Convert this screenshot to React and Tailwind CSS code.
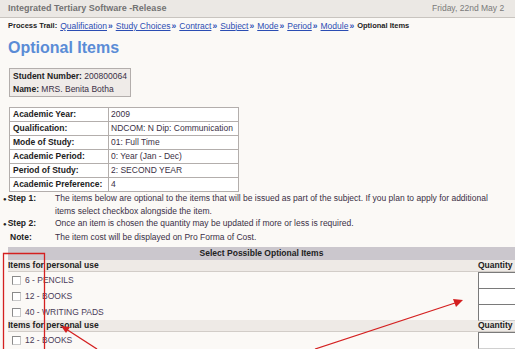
const trail = ["Qualification", "Study Choices", "Contract", "Subject", "Mode", "Period", "Module"];

const details = [
  ["Academic Year:", "2009"],
  ["Qualification:", "NDCOM: N Dip: Communication"],
  ["Mode of Study:", "01: Full Time"],
  ["Academic Period:", "0: Year (Jan - Dec)"],
  ["Period of Study:", "2: SECOND YEAR"],
  ["Academic Preference:", "4"],
];

const groups = [
  { title: "Items for personal use", items: ["6 - PENCILS", "12 - BOOKS", "40 - WRITING PADS"] },
  { title: "Items for personal use", items: ["12 - BOOKS"] },
];

const GroupHeader = ({ title }) => (
  <div className="flex h-[12px] items-center justify-between bg-[#eeeae6] border-b border-[#d2cdc8] text-[8.5px] font-bold text-[#222]">
    <span>{title}</span>
    <span className="w-[37px] shrink-0 whitespace-nowrap">Quantity</span>
  </div>
);

const ItemRow = ({ label }) => (
  <div className="flex h-[16px] items-center justify-between">
    <div className="flex items-center">
      <span className="ml-[4px] h-[9px] w-[9px] border border-[#8a8a8a] border-r-[#c8c8c8] border-b-[#c8c8c8] bg-white"></span>
      <span className="ml-[4px] text-[8.5px] text-[#4a3a58]">{label}</span>
    </div>
    <div className="w-[37px] shrink-0">
      <div className="h-[17px] w-[50px] border border-t-[#7a7a7a] border-l-[#7a7a7a] border-b-[#d0d0d0] border-r-[#d0d0d0] bg-white"></div>
    </div>
  </div>
);

const App = () => {
  return (
    <div className="relative h-[349px] w-[515px] overflow-hidden bg-[#fbf9f6] font-['Liberation_Sans',Arial,sans-serif] text-[#3a2f45]">
      <div className="flex h-[18px] items-center border-b border-[#c8c4bf] bg-[#ebe8e4]">
        <span className="pl-[8px] text-[9px] font-bold text-[#737373]">Integrated Tertiary Software -Release</span>
        <span className="ml-auto w-[83px] shrink-0 overflow-hidden whitespace-nowrap text-[8.5px] text-[#7a7a7a]">
          Friday, 22nd May 2
        </span>
      </div>

      <div className="mt-[2px] flex h-[12px] items-center whitespace-nowrap pl-[8px] text-[7.5px] font-bold text-[#222]">
        <span className="mr-[3px]">Process Trail:</span>
        {trail.map((t) => (
          <span key={t} className="flex items-center">
            <span className="text-[8.5px] font-normal text-[#2b4db3] underline">{t}</span>
            <span className="ml-[1px] mr-[3px] text-[8.5px] text-[#2b4db3]">»</span>
          </span>
        ))}
        <span>Optional Items</span>
      </div>

      <h1 className="mt-[5px] pl-[8px] text-[16px] font-bold leading-[22px] text-[#5a8cd6]">Optional Items</h1>

      <div className="ml-[9px] mt-[9px] w-[122px] border border-[#b3aeac] bg-[#efebe8] px-[3px] py-[1px] text-[8.5px] leading-[12.5px]">
        <div>
          <b className="text-[#222]">Student Number:</b> 200800064
        </div>
        <div>
          <b className="text-[#222]">Name:</b> MRS. Benita Botha
        </div>
      </div>

      <table className="ml-[9px] mt-[10px] w-[230px] border-collapse text-[8.5px]">
        <tbody>
          {details.map(([label, value]) => (
            <tr key={label} className="h-[14px]">
              <td className="w-[99px] border border-[#b3aeac] bg-white px-[3px] py-0 font-bold text-[#222]">{label}</td>
              <td className="border border-[#b3aeac] bg-white px-[2px] py-0">{value}</td>
            </tr>
          ))}
        </tbody>
      </table>

      <div className="pl-[3px] text-[8.5px] leading-[12.5px]">
        <div className="flex">
          <span className="w-[52px] shrink-0 font-bold text-[#222]">
            <span className="mr-[1px] text-[6px]">●</span>Step 1:
          </span>
          <span className="w-[448px]">
            The items below are optional to the items that will be issued as part of the subject. If you plan to apply for additional
            items select checkbox alongside the item.
          </span>
        </div>
        <div className="flex">
          <span className="w-[52px] shrink-0 font-bold text-[#222]">
            <span className="mr-[1px] text-[6px]">●</span>Step 2:
          </span>
          <span>Once an item is chosen the quantity may be updated if more or less is required.</span>
        </div>
        <div className="flex">
          <span className="w-[52px] shrink-0 pl-[7px] font-bold text-[#222]">Note:</span>
          <span>The item cost will be displayed on Pro Forma of Cost.</span>
        </div>
      </div>

      <div className="ml-[8px] mt-[4px]">
        <div className="flex h-[13px] items-center justify-center bg-[#cbc7cd] text-[8.5px] font-bold text-[#222]">
          Select Possible Optional Items
        </div>
        {groups.map((g, i) => (
          <div key={i}>
            <GroupHeader title={g.title} />
            {g.items.map((it) => (
              <ItemRow key={it} label={it} />
            ))}
          </div>
        ))}
      </div>

      <svg className="pointer-events-none absolute left-0 top-0" width="515" height="349" viewBox="0 0 515 349">
        <path d="M3.5 349 V253.5 H44.5 V349" fill="none" stroke="#d42020" strokeWidth="1.3" />
        <line x1="97" y1="349" x2="66" y2="329" stroke="#d42020" strokeWidth="1.3" />
        <polygon points="61,326 70,327 66,333" fill="#d42020" />
        <line x1="315" y1="349" x2="455" y2="303" stroke="#d42020" strokeWidth="1.3" />
        <polygon points="463,300 453,299 456,307" fill="#d42020" />
      </svg>
    </div>
  );
};

export default App;
